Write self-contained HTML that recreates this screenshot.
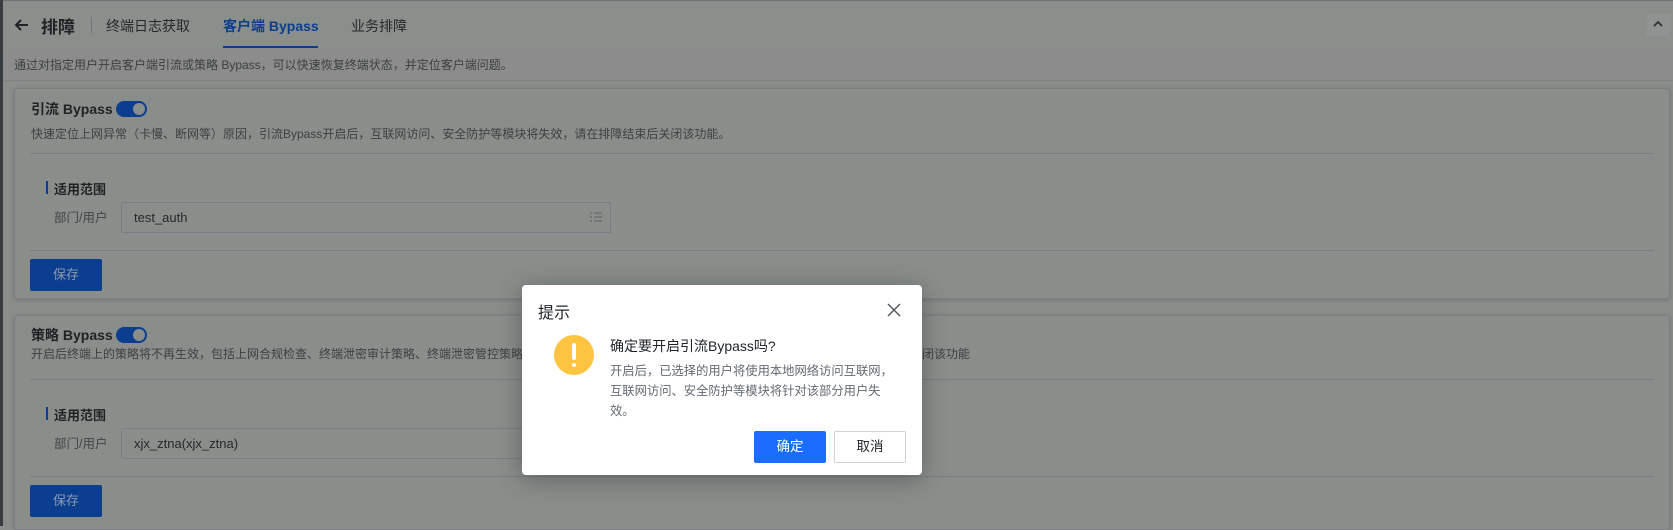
<!DOCTYPE html>
<html><head><meta charset="utf-8"><style>
*{box-sizing:border-box;margin:0;padding:0}
body{width:1673px;height:526px;overflow:hidden;background:#8a8e8a;font-family:"Liberation Sans","Noto Sans CJK SC",sans-serif;color:#2a2d2f;position:relative}
.abs{position:absolute;white-space:nowrap}
.hdr{position:absolute;left:0;top:0;width:1673px;height:49px;background:#8b8f8b;border-top:1px solid #6e7274}
.strip{position:absolute;left:0;top:49px;width:1673px;height:32px;background:#8c8c8c;border-bottom:1px solid #7f8384}
.lb{position:absolute;left:0;top:0;width:3px;height:526px;background:#3a3d40}
.card{position:absolute;left:14px;width:1656px;background:#8a8e8a;border:1px solid #7c8081;border-radius:3px;box-shadow:0 1px 4px rgba(60,70,80,.35)}
.line{position:absolute;left:30px;width:1624px;height:1px;background:#7a7e84}
.tog{position:absolute;width:31px;height:16px;border-radius:8px;background:#0b3e8f}
.tog:after{content:"";position:absolute;right:2px;top:2px;width:12px;height:12px;border-radius:50%;background:#8a8e8a}
.bar{position:absolute;width:2px;height:13px;background:#0b3e8f}
.inp{position:absolute;left:121px;width:490px;height:31px;border:1px solid #7a7e84;border-radius:2px}
.btn{position:absolute;left:30px;width:72px;height:32px;background:#0b3e8f;border-radius:2px;color:#8f9aae;font-size:13px;text-align:center;line-height:32px}
</style></head><body>
<div class="hdr"></div>
<div class="strip"></div>
<div class="lb"></div>
<svg class="abs" style="left:14px;top:17px" width="16" height="16" viewBox="0 0 16 16"><path d="M14 8H2M7 3L2 8l5 5" stroke="#1f2224" stroke-width="2" fill="none"/></svg>
<div class="abs" style="left:41px;top:13px;font-size:17px;font-weight:bold;color:#1f2224">排障</div>
<div class="abs" style="left:91px;top:17px;width:1px;height:16px;background:#707476"></div>
<div class="abs" style="left:106px;top:16px;font-size:14px;color:#25282a">终端日志获取</div>
<div class="abs" style="left:223px;top:16px;font-size:14px;font-weight:bold;color:#0b3e8f">客户端 Bypass</div>
<div class="abs" style="left:223px;top:46px;width:95px;height:2px;background:#0b3e8f"></div>
<div class="abs" style="left:351px;top:16px;font-size:14px;color:#25282a">业务排障</div>
<div class="abs" style="left:1646px;top:14px;width:24px;height:22px;background:#8e9290"></div>
<svg class="abs" style="left:1652px;top:19px" width="12" height="10"><path d="M2 7l4-4 4 4" stroke="#2a2d30" stroke-width="1.6" fill="none"/></svg>
<div class="abs" style="left:14px;top:56px;font-size:12px;color:#3c4042">通过对指定用户开启客户端引流或策略 Bypass，可以快速恢复终端状态，并定位客户端问题。</div>

<div class="card" style="top:88px;height:211px"></div>
<div class="abs" style="left:31px;top:99px;font-size:14px;font-weight:bold;color:#1f2224">引流 Bypass</div>
<div class="tog" style="left:116px;top:101px"></div>
<div class="abs" style="left:31px;top:125px;font-size:12px;color:#3c4042">快速定位上网异常（卡慢、断网等）原因，引流Bypass开启后，互联网访问、安全防护等模块将失效，请在排障结束后关闭该功能。</div>
<div class="line" style="top:153px"></div>
<div class="bar" style="left:46px;top:181px"></div>
<div class="abs" style="left:54px;top:179px;font-size:13px;font-weight:bold;color:#1f2224">适用范围</div>
<div class="abs" style="left:54px;top:207px;font-size:12.5px;color:#404446">部门/用户</div>
<div class="inp" style="top:202px"></div>
<div class="abs" style="left:134px;top:210px;font-size:13px;color:#25282a">test_auth</div>
<svg class="abs" style="left:590px;top:211px" width="12" height="12"><path d="M0 2h2M4 2h8M0 6h2M4 6h8M0 10h2M4 10h8" stroke="#5c6064" stroke-width="1"/></svg>
<div class="line" style="top:250px"></div>
<div class="btn" style="top:259px">保存</div>

<div class="card" style="top:315px;height:215px"></div>
<div class="abs" style="left:31px;top:325px;font-size:14px;font-weight:bold;color:#1f2224">策略 Bypass</div>
<div class="tog" style="left:116px;top:327px"></div>
<div class="abs" style="left:31px;top:345px;font-size:12px;color:#3c4042">开启后终端上的策略将不再生效，包括上网合规检查、终端泄密审计策略、终端泄密管控策略</div>
<div class="abs" style="left:922px;top:345px;font-size:12px;color:#3c4042">闭该功能</div>
<div class="line" style="top:379px"></div>
<div class="bar" style="left:46px;top:407px"></div>
<div class="abs" style="left:54px;top:405px;font-size:13px;font-weight:bold;color:#1f2224">适用范围</div>
<div class="abs" style="left:54px;top:433px;font-size:12.5px;color:#404446">部门/用户</div>
<div class="inp" style="top:428px"></div>
<div class="abs" style="left:134px;top:436px;font-size:13px;color:#25282a">xjx_ztna(xjx_ztna)</div>
<div class="line" style="top:476px"></div>
<div class="btn" style="top:485px">保存</div>

<div class="abs" style="left:522px;top:285px;width:400px;height:190px;background:#fff;border-radius:4px;box-shadow:0 4px 24px rgba(40,45,50,.45)"></div>
<div class="abs" style="left:538px;top:299px;font-size:16px;color:#1f2329">提示</div>
<svg class="abs" style="left:887px;top:303px" width="14" height="14"><path d="M1 1l12 12M13 1L1 13" stroke="#555a60" stroke-width="1.5"/></svg>
<div class="abs" style="left:554px;top:335px;width:40px;height:40px;border-radius:50%;background:#fcc440"></div>
<div class="abs" style="left:572px;top:343px;width:4px;height:17px;background:#fff;border-radius:2px"></div>
<div class="abs" style="left:572px;top:363px;width:4px;height:4px;background:#fff;border-radius:2px"></div>
<div class="abs" style="left:610px;top:336px;font-size:14px;color:#1f2329">确定要开启引流Bypass吗?</div>
<div class="abs" style="left:610px;top:361px;font-size:12.3px;line-height:20px;color:#646a73;white-space:normal;width:290px">开启后，已选择的用户将使用本地网络访问互联网，互联网访问、安全防护等模块将针对该部分用户失效。</div>
<div class="abs" style="left:754px;top:431px;width:72px;height:32px;background:#1a6dff;border-radius:2px;color:#fff;font-size:13.5px;text-align:center;line-height:32px">确定</div>
<div class="abs" style="left:834px;top:431px;width:72px;height:32px;background:#fff;border:1px solid #d0d3d6;border-radius:2px;color:#1f2329;font-size:13.5px;text-align:center;line-height:30px">取消</div>
</body></html>
